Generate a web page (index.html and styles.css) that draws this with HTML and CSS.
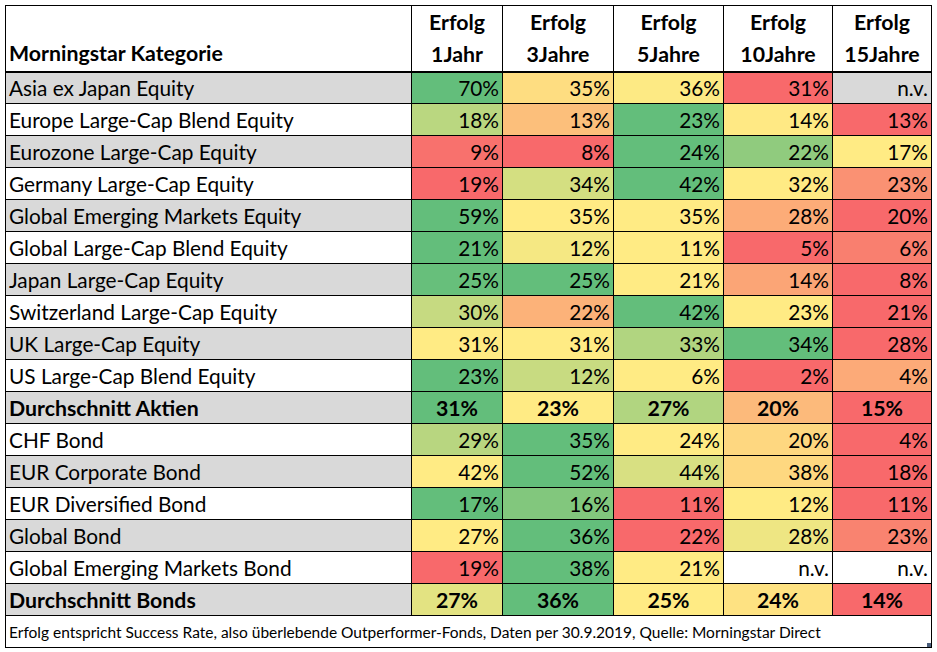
FILE: index.html
```html
<!DOCTYPE html>
<html lang="de">
<head>
<meta charset="utf-8">
<title>Morningstar Kategorie – Erfolg</title>
<link rel="stylesheet" href="styles.css">
</head>
<body>
<div class="sheet">
<table class="grid">
  <colgroup>
    <col class="c-name"><col class="c-1"><col class="c-3"><col class="c-5"><col class="c-10"><col class="c-15">
  </colgroup>
  <thead>
    <tr class="head">
      <th class="h-name">Morningstar Kategorie</th>
      <th>Erfolg<br>1Jahr</th>
      <th>Erfolg<br>3Jahre</th>
      <th>Erfolg<br>5Jahre</th>
      <th>Erfolg<br>10Jahre</th>
      <th>Erfolg<br>15Jahre</th>
    </tr>
  </thead>
  <tbody>
    <tr class="alt"><td class="name">Asia ex Japan Equity</td><td style="background:#63BE7B">70%</td><td style="background:#FEDD81">35%</td><td style="background:#FDEA84">36%</td><td style="background:#F8696B">31%</td><td>n.v.</td></tr>
    <tr><td class="name">Europe Large-Cap Blend Equity</td><td style="background:#BAD780">18%</td><td style="background:#FCBF7B">13%</td><td style="background:#63BE7B">23%</td><td style="background:#FFE984">14%</td><td style="background:#F8696B">13%</td></tr>
    <tr class="alt"><td class="name">Eurozone Large-Cap Equity</td><td style="background:#F8716D">9%</td><td style="background:#F8696B">8%</td><td style="background:#63BE7B">24%</td><td style="background:#90CB7E">22%</td><td style="background:#FFEB84">17%</td></tr>
    <tr><td class="name">Germany Large-Cap Equity</td><td style="background:#F8696B">19%</td><td style="background:#D4DF81">34%</td><td style="background:#63BE7B">42%</td><td style="background:#FFEB84">32%</td><td style="background:#FA9173">23%</td></tr>
    <tr class="alt"><td class="name">Global Emerging Markets Equity</td><td style="background:#63BE7B">59%</td><td style="background:#FFEB84">35%</td><td style="background:#FFEB84">35%</td><td style="background:#FCAC78">28%</td><td style="background:#F8696B">20%</td></tr>
    <tr><td class="name">Global Large-Cap Blend Equity</td><td style="background:#63BE7B">21%</td><td style="background:#F5E883">12%</td><td style="background:#FFEB84">11%</td><td style="background:#F8696B">5%</td><td style="background:#F97F6F">6%</td></tr>
    <tr class="alt"><td class="name">Japan Large-Cap Equity</td><td style="background:#67BF7B">25%</td><td style="background:#63BE7B">25%</td><td style="background:#FFEB84">21%</td><td style="background:#FBA576">14%</td><td style="background:#F8696B">8%</td></tr>
    <tr><td class="name">Switzerland Large-Cap Equity</td><td style="background:#C6DA81">30%</td><td style="background:#FCB279">22%</td><td style="background:#63BE7B">42%</td><td style="background:#FFEB84">23%</td><td style="background:#F8696B">21%</td></tr>
    <tr class="alt"><td class="name">UK Large-Cap Equity</td><td style="background:#FFEB84">31%</td><td style="background:#FFEB84">31%</td><td style="background:#B1D580">33%</td><td style="background:#63BE7B">34%</td><td style="background:#F8696B">28%</td></tr>
    <tr><td class="name">US Large-Cap Blend Equity</td><td style="background:#63BE7B">23%</td><td style="background:#C8DB81">12%</td><td style="background:#FFEB84">6%</td><td style="background:#F8696B">2%</td><td style="background:#FCAA78">4%</td></tr>
    <tr class="alt avg"><td class="name">Durchschnitt Aktien</td><td style="background:#63BE7B">31%</td><td style="background:#FFEB84">23%</td><td style="background:#B1D580">27%</td><td style="background:#FCBA7B">20%</td><td style="background:#F8696B">15%</td></tr>
    <tr><td class="name">CHF Bond</td><td style="background:#B8D680">29%</td><td style="background:#63BE7B">35%</td><td style="background:#FFEB84">24%</td><td style="background:#FED780">20%</td><td style="background:#F8696B">4%</td></tr>
    <tr class="alt"><td class="name">EUR Corporate Bond</td><td style="background:#FFEB84">42%</td><td style="background:#63BE7B">52%</td><td style="background:#D8E082">44%</td><td style="background:#FED880">38%</td><td style="background:#F8696B">18%</td></tr>
    <tr><td class="name">EUR Diversified Bond</td><td style="background:#63BE7B">17%</td><td style="background:#82C77D">16%</td><td style="background:#F8696B">11%</td><td style="background:#FFEB84">12%</td><td style="background:#F8696B">11%</td></tr>
    <tr class="alt"><td class="name">Global Bond</td><td style="background:#FFEB84">27%</td><td style="background:#63BE7B">36%</td><td style="background:#F8696B">22%</td><td style="background:#EEE683">28%</td><td style="background:#F98370">23%</td></tr>
    <tr><td class="name">Global Emerging Markets Bond</td><td style="background:#F8696B">19%</td><td style="background:#63BE7B">38%</td><td style="background:#FFEB84">21%</td><td>n.v.</td><td>n.v.</td></tr>
    <tr class="alt avg"><td class="name">Durchschnitt Bonds</td><td style="background:#E3E382">27%</td><td style="background:#63BE7B">36%</td><td style="background:#FFEB84">25%</td><td style="background:#FEE282">24%</td><td style="background:#F8696B">14%</td></tr>
  </tbody>
  <tfoot>
    <tr class="foot"><td colspan="6">Erfolg entspricht Success Rate, also überlebende Outperformer-Fonds, Daten per 30.9.2019, Quelle: Morningstar Direct<span class="handle"></span></td></tr>
  </tfoot>
</table>
</div>
</body>
</html>
```

FILE: styles.css
```css
html, body {
  margin: 0;
  padding: 0;
  background: #ffffff;
}

.sheet {
  padding: 5px 0 0 5px;
}

.grid {
  border-collapse: collapse;
  table-layout: fixed;
  width: 926px;
  font-family: Lato, "Liberation Sans", sans-serif;
  font-size: 20.8px;
  color: #000;
}

.c-name { width: 406px; }
.c-1 { width: 91px; }
.c-3 { width: 111px; }
.c-5 { width: 110px; }
.c-10 { width: 109px; }
.c-15 { width: 99px; }

.grid th,
.grid td {
  border: 1px solid #000;
  padding: 0 3px 0 3px;
  white-space: nowrap;
  overflow: hidden;
}

.head {
  height: 66px;
}

.head th {
  font-weight: bold;
  font-size: 21.3px;
  text-align: center;
  vertical-align: top;
  line-height: 32px;
  border-bottom: 2px solid #000;
  padding-top: 0;
}

.head th.h-name {
  text-align: left;
  vertical-align: bottom;
  padding-bottom: 2px;
}

tbody tr {
  height: 32px;
}

tbody td {
  text-align: right;
  line-height: 30px;
  padding-right: 3px;
}

tbody td.name {
  text-align: left;
}

tbody tr.alt td {
  background: #d9d9d9;
}

tbody tr.avg td {
  font-weight: bold;
  font-size: 21.3px;
  text-align: center;
}

tbody tr.avg td.name {
  text-align: left;
}

.foot {
  height: 32px;
}

.foot td {
  position: relative;
  font-size: 15.5px;
  line-height: 30px;
  text-align: left;
}

.handle {
  position: absolute;
  right: -1px;
  bottom: -1px;
  width: 5px;
  height: 5px;
  background: #4a5d7a;
}
```
